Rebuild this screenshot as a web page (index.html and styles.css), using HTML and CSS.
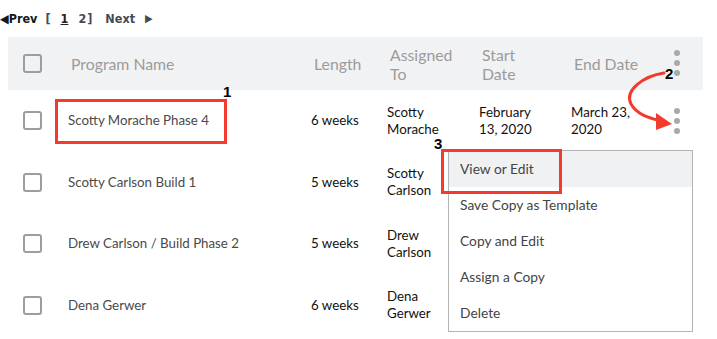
FILE: index.html
```html
<!DOCTYPE html>
<html>
<head>
    <meta charset="utf-8">
    <title>Programs</title>
    <link rel="stylesheet" href="styles.css">
</head>
<body>
    <div class="page">
        <div class="pager">
            <span class="pg-prev">&#9664;Prev</span>
            <span class="pg-bracket">[</span>
            <span class="pg-num current">1</span>
            <span class="pg-num last">2</span><span class="pg-bracket close">]</span>
            <span class="pg-next">Next</span>
            <span class="pg-arrow">&#9654;</span>
        </div>

        <div class="table">
            <div class="row head">
                <div class="cell check"><span class="box"></span></div>
                <div class="cell">Program Name</div>
                <div class="cell">Length</div>
                <div class="cell">Assigned<br>To</div>
                <div class="cell">Start<br>Date</div>
                <div class="cell">End Date</div>
                <div class="cell kebab"><span class="dots"><i></i><i></i><i></i></span></div>
            </div>
            <div class="row">
                <div class="cell check"><span class="box"></span></div>
                <div class="cell name">Scotty Morache Phase 4</div>
                <div class="cell">6 weeks</div>
                <div class="cell">Scotty<br>Morache</div>
                <div class="cell">February<br>13, 2020</div>
                <div class="cell">March 23,<br>2020</div>
                <div class="cell kebab"><span class="dots"><i></i><i></i><i></i></span></div>
            </div>
            <div class="row">
                <div class="cell check"><span class="box"></span></div>
                <div class="cell name">Scotty Carlson Build 1</div>
                <div class="cell">5 weeks</div>
                <div class="cell">Scotty<br>Carlson</div>
                <div class="cell"></div>
                <div class="cell"></div>
                <div class="cell kebab"></div>
            </div>
            <div class="row">
                <div class="cell check"><span class="box"></span></div>
                <div class="cell name">Drew Carlson / Build Phase 2</div>
                <div class="cell">5 weeks</div>
                <div class="cell">Drew<br>Carlson</div>
                <div class="cell"></div>
                <div class="cell"></div>
                <div class="cell kebab"></div>
            </div>
            <div class="row">
                <div class="cell check"><span class="box"></span></div>
                <div class="cell name">Dena Gerwer</div>
                <div class="cell">6 weeks</div>
                <div class="cell">Dena<br>Gerwer</div>
                <div class="cell"></div>
                <div class="cell"></div>
                <div class="cell kebab"></div>
            </div>
        </div>

        <ul class="menu">
            <li class="active">View or Edit</li>
            <li>Save Copy as Template</li>
            <li>Copy and Edit</li>
            <li>Assign a Copy</li>
            <li>Delete</li>
        </ul>

        <!-- annotations -->
        <div class="mark mark-1"></div>
        <div class="mark mark-3"></div>
        <span class="step step-1">1</span>
        <span class="step step-2">2</span>
        <span class="step step-3">3</span>
        <svg class="arrow" width="717" height="339" viewBox="0 0 717 339">
            <path d="M664,73 C644,76 624,90 631,104 C637,115 650,118 661,121" fill="none" stroke="#f23a2e" stroke-width="3" stroke-linecap="round"/>
            <polygon points="672,124 656,113 656,130" fill="#f23a2e"/>
        </svg>
    </div>
</body>
</html>
```

FILE: styles.css
```css
/* General */
body {
    margin: 0;
    background: #fff;
    font-family: Lato, 'Open Sans', sans-serif;
}
.page {
    position: relative;
    width: 717px;
    height: 339px;
    overflow: hidden;
}

/* Pager */
.pager {
    height: 37px;
    display: flex;
    align-items: center;
    font-family: 'DejaVu Sans Condensed', 'DejaVu Sans', sans-serif;
    font-weight: bold;
    font-size: 12.5px;
    color: #454a55;
}
.pg-prev {
    color: #15171c;
    margin-right: 8px;
}
.pg-bracket {
    margin-right: 10px;
}
.pg-bracket.close {
    margin-right: 13px;
    margin-left: 1px;
}
.pg-num {
    margin-right: 10px;
}
.pg-num.last {
    margin-right: 0;
}
.pg-num.current {
    text-decoration: underline;
    color: #222;
}
.pg-next {
    margin-right: 10px;
}
.pg-arrow {
    font-size: 11px;
}

/* Table */
.table {
    margin-left: 8px;
    width: 695px;
}
.row {
    display: grid;
    grid-template-columns: 52px 243px 76px 92px 92px 97px 43px;
    height: 61.5px;
    font-size: 13.3px;
    line-height: 17px;
    color: #111;
}
.row.head {
    height: 53px;
    background: #f1f2f4;
    color: #9b9b9b;
    font-size: 15.8px;
    line-height: 19px;
}
.cell {
    display: flex;
    align-items: center;
    padding-left: 8px;
}
.head .cell {
    padding-left: 11px;
}
.cell.name {
    color: #4a4a4a;
}
.cell.check,
.head .cell.check {
    padding-left: 15px;
}
.box {
    width: 15px;
    height: 15px;
    border: 2px solid #9d9d9d;
    border-radius: 3px;
}
.cell.kebab,
.head .cell.kebab {
    padding-left: 14px;
}
.dots {
    display: flex;
    flex-direction: column;
    gap: 4px;
}
.dots i {
    width: 6px;
    height: 6px;
    border-radius: 50%;
    background: #a9a9a9;
}
.head .dots {
    margin-top: -1px;
}

/* Dropdown menu */
.menu {
    position: absolute;
    left: 448px;
    top: 150px;
    width: 243px;
    margin: 0;
    padding: 0;
    list-style: none;
    background: #fff;
    border: 1px solid #b3b3b3;
    font-size: 13.8px;
    color: #444;
}
.menu li {
    height: 36px;
    line-height: 36px;
    padding-left: 11px;
}
.menu li.active {
    background: #f0f1f3;
}

/* Annotations */
.mark {
    position: absolute;
    border: 3px solid #f23a2e;
}
.mark-1 {
    left: 55px;
    top: 99px;
    width: 166px;
    height: 39px;
}
.mark-3 {
    left: 441px;
    top: 149px;
    width: 115px;
    height: 39px;
}
.step {
    position: absolute;
    font-family: 'Liberation Sans', Arial, sans-serif;
    font-weight: bold;
    font-size: 15px;
    line-height: 12px;
    color: #000;
}
.step-1 {
    left: 223px;
    top: 86px;
}
.step-2 {
    left: 665px;
    top: 68px;
}
.step-3 {
    left: 434px;
    top: 138px;
}
.arrow {
    position: absolute;
    left: 0;
    top: 0;
}
```
